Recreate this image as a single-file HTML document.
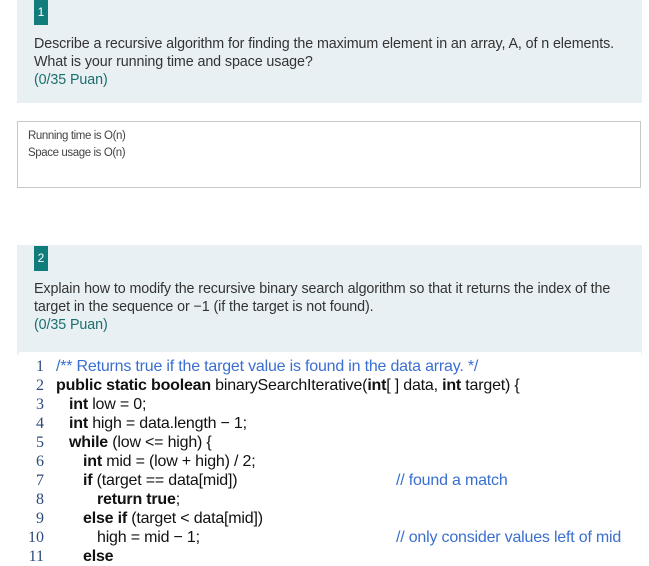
<!DOCTYPE html>
<html><head><meta charset="utf-8"><style>
body{margin:0;width:649px;height:563px;overflow:hidden;background:#fff;font-family:"Liberation Sans",sans-serif;position:relative}
.p{position:absolute;left:17px;width:625px;background:#e9f0f3}
.b{position:absolute;left:34px;width:14px;background:#107c7c;color:#fff;font-size:12px;text-align:center}
.t{position:absolute;left:34px;font-size:14.3px;color:#333;line-height:18px;white-space:nowrap;letter-spacing:-0.1px}
.pu{color:#1b6e6e}
.a{position:absolute;left:17px;top:121px;width:622px;height:65px;border:1px solid #c8c8c8;font-size:11.5px;color:#444;line-height:17px;letter-spacing:-0.4px}
.c{position:absolute;left:19px;top:352px;width:622px;height:211px;background:#fff}
.ln{position:absolute;left:22px;width:22px;text-align:right;font-family:"Liberation Serif",serif;font-size:16px;color:#2e4a7a}
.cl{position:absolute;font-size:16px;color:#111;white-space:nowrap;letter-spacing:-0.2px}
.cm{color:#3a6fd0}
</style></head><body>
<div class="p" style="top:0;height:103px"></div>
<div class="b" style="top:0;height:25px;line-height:25px">1</div>
<div class="t" style="top:35px">Describe a recursive algorithm for finding the maximum element in an array, A, of n elements.<br>What is your running time and space usage?<br><span class="pu">(0/35 Puan)</span></div>
<div class="a"><div style="padding:6px 0 0 10px">Running time is O(n)<br>Space usage is O(n)</div></div>
<div class="p" style="top:245px;height:110px"></div>
<div class="b" style="top:246px;height:25px;line-height:25px">2</div>
<div class="t" style="top:280px">Explain how to modify the recursive binary search algorithm so that it returns the index of the<br>target in the sequence or −1 (if the target is not found).<br><span class="pu">(0/35 Puan)</span></div>
<div class="c"></div>
<div class="ln" style="top:358px">1</div><div class="cl cm" style="left:56px;top:358px">/** Returns true if the target value is found in the data array. */</div>
<div class="ln" style="top:377px">2</div><div class="cl" style="left:56px;top:377px"><b>public static boolean</b> binarySearchIterative(<b>int</b>[ ] data, <b>int</b> target) {</div>
<div class="ln" style="top:396px">3</div><div class="cl" style="left:69px;top:396px"><b>int</b> low = 0;</div>
<div class="ln" style="top:415px">4</div><div class="cl" style="left:69px;top:415px"><b>int</b> high = data.length − 1;</div>
<div class="ln" style="top:434px">5</div><div class="cl" style="left:69px;top:434px"><b>while</b> (low &lt;= high) {</div>
<div class="ln" style="top:453px">6</div><div class="cl" style="left:83px;top:453px"><b>int</b> mid = (low + high) / 2;</div>
<div class="ln" style="top:472px">7</div><div class="cl" style="left:83px;top:472px"><b>if</b> (target == data[mid])</div><div class="cl cm" style="left:396px;top:472px">// found a match</div>
<div class="ln" style="top:491px">8</div><div class="cl" style="left:97px;top:491px"><b>return true</b>;</div>
<div class="ln" style="top:510px">9</div><div class="cl" style="left:83px;top:510px"><b>else if</b> (target &lt; data[mid])</div>
<div class="ln" style="top:529px">10</div><div class="cl" style="left:97px;top:529px">high = mid − 1;</div><div class="cl cm" style="left:396px;top:529px">// only consider values left of mid</div>
<div class="ln" style="top:548px">11</div><div class="cl" style="left:83px;top:548px"><b>else</b></div>
</body></html>
